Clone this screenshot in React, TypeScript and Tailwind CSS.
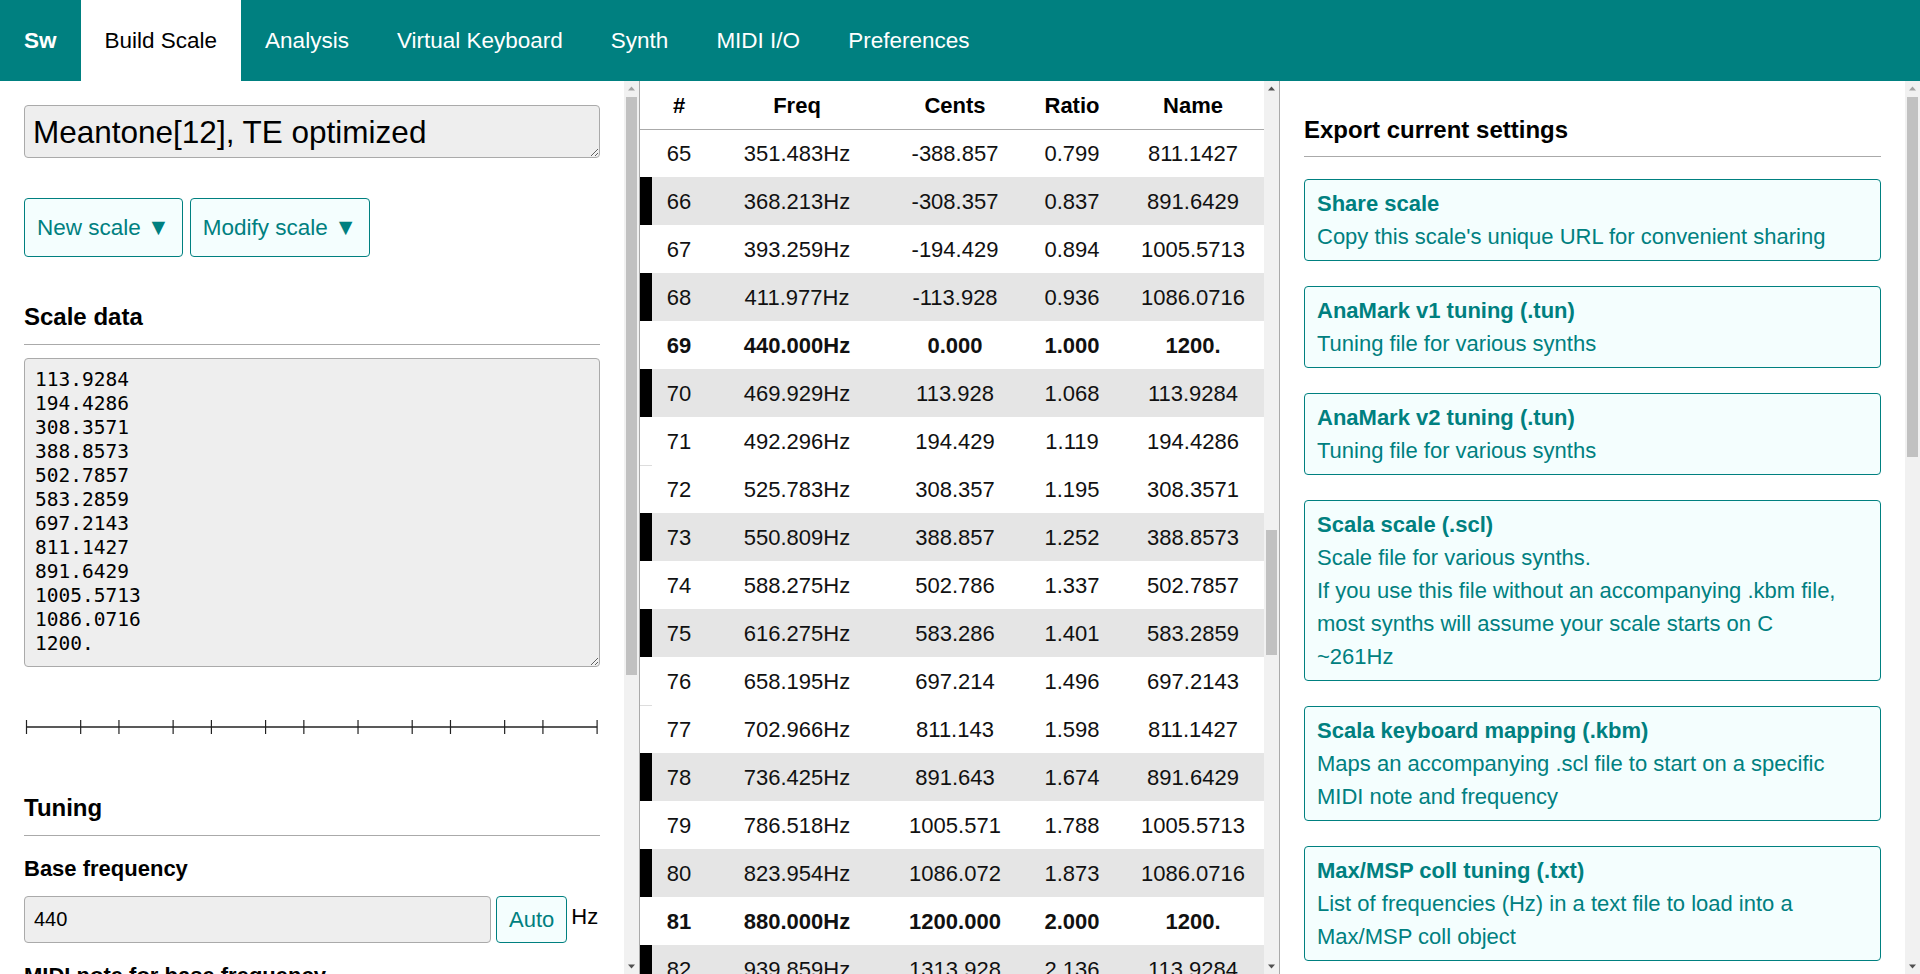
import { useLayoutEffect, useRef } from "react"

const navItems = ["Build Scale", "Analysis", "Virtual Keyboard", "Synth", "MIDI I/O", "Preferences"]

// scale degrees (cents) of Meantone[12]
const scaleLines = [
  "113.9284",
  "194.4286",
  "308.3571",
  "388.8573",
  "502.7857",
  "583.2859",
  "697.2143",
  "811.1427",
  "891.6429",
  "1005.5713",
  "1086.0716",
  "1200.",
]
const scaleCents = scaleLines.map((s) => parseFloat(s))

const blackKeys = [1, 3, 6, 8, 10]

const tuningRows = Array.from({ length: 128 }, (_, n) => {
  const d = n - 69
  const octave = Math.floor(d / 12)
  const idx = ((d % 12) + 12) % 12
  const cents = octave * 1200 + (idx === 0 ? 0 : scaleCents[idx - 1])
  const ratio = Math.pow(2, cents / 1200)
  return {
    n,
    freq: (440 * ratio).toFixed(3) + "Hz",
    cents: cents.toFixed(3),
    ratio: ratio.toFixed(3),
    name: idx === 0 ? "1200." : scaleLines[idx - 1],
    bold: idx === 0,
    black: blackKeys.includes(n % 12),
    split: n % 12 === 0 || n % 12 === 5,
  }
})

const exportItems = [
  { title: "Share scale", lines: ["Copy this scale's unique URL for convenient sharing"] },
  { title: "AnaMark v1 tuning (.tun)", lines: ["Tuning file for various synths"] },
  { title: "AnaMark v2 tuning (.tun)", lines: ["Tuning file for various synths"] },
  {
    title: "Scala scale (.scl)",
    lines: [
      "Scale file for various synths.",
      "If you use this file without an accompanying .kbm file,",
      "most synths will assume your scale starts on C",
      "~261Hz",
    ],
  },
  {
    title: "Scala keyboard mapping (.kbm)",
    lines: ["Maps an accompanying .scl file to start on a specific MIDI note and frequency"],
  },
  {
    title: "Max/MSP coll tuning (.txt)",
    lines: ["List of frequencies (Hz) in a text file to load into a Max/MSP coll object"],
  },
  {
    title: "Pure Data text tuning (.txt)",
    lines: ["List of frequencies (Hz) in a text file to load into a Pure Data text object"],
  },
  { title: "Kontakt tuning script (.txt)", lines: ["Tuning script for Native Instruments Kontakt"] },
  { title: "Soniccouture tuning (.nka)", lines: ["Tuning file for Soniccouture instruments"] },
  { title: "Harmor pitch map (.fnv)", lines: ["Pitch map for Image-Line Harmor"] },
  { title: "Sytrus pitch map (.fnv)", lines: ["Pitch map for Image-Line Sytrus"] },
  { title: "Deflemask reference (.txt)", lines: ["Note names and cent offsets for Deflemask"] },
  { title: "Reaper note name map (.txt)", lines: ["Note name map for Reaper's piano roll"] },
  { title: "Korg 'logue user scale", lines: ["Tuning for Korg minilogue, monologue and prologue"] },
]

function Arrow({ up, dim }: { up?: boolean; dim?: boolean }) {
  return (
    <svg width="15" height="15" className="block shrink-0">
      <polygon points={up ? "4,9.5 11,9.5 7.5,5.5" : "4,5.5 11,5.5 7.5,9.5"} fill={dim ? "#a3a3a3" : "#505050"} />
    </svg>
  )
}

// classic desktop scrollbar look
function Scrollbar({ thumb, upDim }: { thumb: string; upDim?: boolean }) {
  return (
    <div className="w-[15px] h-full shrink-0 flex flex-col bg-[#f1f1f1]">
      <Arrow up dim={upDim} />
      <div className="flex-1 px-[2px]">
        <div className={`bg-[#c1c1c1] ${thumb}`} />
      </div>
      <Arrow />
    </div>
  )
}

function SectionHeading({ children, className = "" }: { children: React.ReactNode; className?: string }) {
  return (
    <h2 className={`text-[24px] font-bold leading-[28px] border-b border-[#aaaaaa] ${className}`}>
      {children}
    </h2>
  )
}

function Ruler() {
  const width = 570.6
  return (
    <svg width="576" height="14" className="mt-[53px] block">
      <line x1="2.5" y1="7" x2={2.5 + width} y2="7" stroke="#222" strokeWidth="1.5" />
      {[0, ...scaleCents].map((c) => {
        const x = 2.5 + (c / 1200) * width
        return <line key={c} x1={x} y1="0" x2={x} y2="14" stroke="#222" strokeWidth="1.2" />
      })}
    </svg>
  )
}

function BuildPanel() {
  return (
    <div className="w-[640px] h-full shrink-0 flex border-r border-[#aaaaaa]">
      <div className="flex-1 min-w-0 overflow-hidden px-6 pt-6">
        <textarea
          rows={1}
          defaultValue="Meantone[12], TE optimized"
          className="block w-full h-[53px] bg-[#eeeeee] border border-[#aaaaaa] rounded-[4px] px-2 pt-[8px] text-[31.5px] leading-[37px] text-black overflow-hidden resize-y"
        />

        <div className="flex gap-[7px] mt-10">
          <button className="h-[59px] px-3 py-4 text-[22.5px] leading-[25px] text-[#008080] bg-[#f4fefe] border border-[#008080] rounded-[4px]">
            New scale <span className="text-[23px]">▼</span>
          </button>
          <button className="h-[59px] px-3 py-4 text-[22.5px] leading-[25px] text-[#008080] bg-[#f4fefe] border border-[#008080] rounded-[4px]">
            Modify scale <span className="text-[23px]">▼</span>
          </button>
        </div>

        <SectionHeading className="mt-[46px] pb-[13px]">Scale data</SectionHeading>
        <textarea
          defaultValue={scaleLines.join("\n")}
          className="block w-full h-[309px] mt-[13px] bg-[#eeeeee] border border-[#aaaaaa] rounded-[4px] pl-[10px] pt-[9px] font-['DejaVu_Sans_Mono',monospace] text-[19.5px] leading-[24px] text-black overflow-hidden resize-y"
        />

        <Ruler />

        <SectionHeading className="mt-[60px] pb-[13px]">Tuning</SectionHeading>

        <h3 className="mt-5 text-[22px] font-bold leading-[25px]">Base frequency</h3>
        <div className="flex items-center mt-[15px] h-[47px]">
          <input
            defaultValue="440"
            className="w-[467px] h-full bg-[#eeeeee] border border-[#aaaaaa] rounded-[4px] pl-[9px] text-[20px] text-black"
          />
          <button className="ml-[5px] h-full px-3 text-[22px] text-[#008080] bg-[#f4fefe] border border-[#008080] rounded-[4px]">
            Auto
          </button>
          <span className="ml-1 self-start mt-1 text-[22px]">Hz</span>
        </div>

        <h3 className="mt-5 text-[22px] font-bold leading-[25px]">MIDI note for base frequency</h3>
        <div className="flex items-center mt-[15px] h-[47px]">
          <input
            defaultValue="69"
            className="w-[120px] h-full bg-[#eeeeee] border border-[#aaaaaa] rounded-[4px] pl-[9px] text-[20px] text-black"
          />
          <span className="ml-3 text-[22px]">A4</span>
        </div>
      </div>
      <Scrollbar thumb="mt-[1px] h-[578px]" upDim />
    </div>
  )
}

function TuningTable() {
  const ref = useRef<HTMLDivElement>(null)

  useLayoutEffect(() => {
    if (ref.current) ref.current.scrollTop = 65 * 48 + 1
  }, [])

  const cols = "grid grid-cols-[12px_54px_182px_134px_100px_1fr]"

  return (
    <div className="w-[640px] h-full shrink-0 flex border-r border-[#aaaaaa]">
      <div ref={ref} className="flex-1 min-w-0 overflow-hidden">
        <div className={`${cols} sticky top-0 z-10 h-[49px] items-center bg-white border-b border-[#aaaaaa] text-[22px] font-bold text-center`}>
          <span />
          <span>#</span>
          <span>Freq</span>
          <span>Cents</span>
          <span>Ratio</span>
          <span>Name</span>
        </div>
        {tuningRows.map((row) => (
          <div
            key={row.n}
            className={`${cols} h-12 text-[22px] text-center text-[#111] ${row.bold ? "font-bold" : ""} ${row.black ? "bg-[#e5e5e5]" : "bg-white"}`}
          >
            <span className={`${row.black ? "bg-black" : "bg-white"} ${row.split ? "border-t border-[#dddddd]" : ""}`} />
            <span className="self-center">{row.n}</span>
            <span className="self-center">{row.freq}</span>
            <span className="self-center">{row.cents}</span>
            <span className="self-center">{row.ratio}</span>
            <span className="self-center">{row.name}</span>
          </div>
        ))}
      </div>
      <Scrollbar thumb="mt-[434px] h-[125px]" />
    </div>
  )
}

function ExportPanel() {
  return (
    <div className="flex-1 h-full flex">
      <div className="flex-1 min-w-0 overflow-hidden px-6 pt-[35px] flex flex-col gap-[25px]">
        <SectionHeading className="pb-[12px] -mb-[3px]">Export current settings</SectionHeading>
        {exportItems.map((item) => (
          <div
            key={item.title}
            className="shrink-0 px-3 py-[7px] bg-[#f4fefe] border border-[#008080] rounded-[4px] text-[#008080] text-[22px] leading-[33px] cursor-pointer"
          >
            <div className="font-bold">{item.title}</div>
            {item.lines.map((line) => (
              <div key={line}>{line}</div>
            ))}
          </div>
        ))}
      </div>
      <Scrollbar thumb="mt-[1px] h-[360px]" upDim />
    </div>
  )
}

export default function App() {
  return (
    <div className="w-[1920px] h-[974px] overflow-hidden flex flex-col bg-white text-black font-['Liberation_Sans',Arial,sans-serif]">
      <nav className="h-[81px] shrink-0 flex bg-[#008080] text-white text-[22.5px]">
        <div className="px-6 flex items-center font-bold">Sw</div>
        {navItems.map((item, i) => (
          <div
            key={item}
            className={`px-6 flex items-center cursor-pointer ${i === 0 ? "bg-white text-black" : ""}`}
          >
            {item}
          </div>
        ))}
      </nav>

      <div className="flex h-[893px]">
        <BuildPanel />
        <TuningTable />
        <ExportPanel />
      </div>
    </div>
  )
}
